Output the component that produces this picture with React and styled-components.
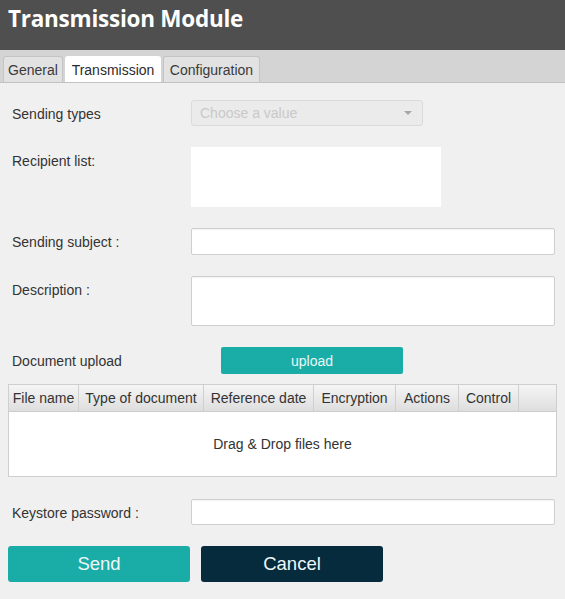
import React from 'react';
import styled, { createGlobalStyle } from 'styled-components';

const GlobalStyle = createGlobalStyle`
  html, body {
    margin: 0;
    padding: 0;
    background: #f0f0f0;
  }
  body {
    font-family: "Liberation Sans", Arial, sans-serif;
    color: #333;
  }
  * {
    box-sizing: border-box;
  }
`;

const Page = styled.div`
  width: 565px;
  min-height: 599px;
  background: #f0f0f0;
`;

const TitleBar = styled.header`
  height: 50px;
  background: #4f4f4f;
  padding: 3px 0 0 8px;
`;

const Title = styled.h1`
  margin: 0;
  font-family: "Open Sans", sans-serif;
  font-weight: 700;
  font-size: 22.5px;
  line-height: 32px;
  color: #ffffff;
  letter-spacing: -0.25px;
`;

const TabBar = styled.nav`
  display: flex;
  align-items: flex-end;
  gap: 2px;
  height: 33px;
  padding: 0 0 0 3px;
  background: #d4d4d4;
  border-bottom: 1px solid #c2c2c2;
`;

const Tab = styled.div`
  height: 26px;
  width: ${p => p.$w}px;
  display: flex;
  align-items: center;
  justify-content: center;
  font-size: 14px;
  color: ${p => (p.$active ? '#2b2b2b' : '#3a3a3a')};
  background: ${p => (p.$active ? '#ffffff' : '#e2e2e2')};
  border: 1px solid ${p => (p.$active ? '#ffffff' : '#c4c4c4')};
  border-bottom: none;
  border-radius: 3px 3px 0 0;
`;

const Content = styled.main`
  display: flex;
  flex-direction: column;
  padding: 17px 10px 0 8px;
`;

const Row = styled.div`
  display: grid;
  grid-template-columns: 183px 1fr;
  align-items: start;
  margin-bottom: ${p => p.$mb ?? 21}px;
`;

const Label = styled.label`
  padding-left: 4px;
  font-size: 14px;
  line-height: 28px;
  margin-bottom: -4px;
  color: #333;
`;

const Select = styled.div`
  width: 232px;
  height: 26px;
  display: flex;
  align-items: center;
  justify-content: space-between;
  padding: 0 10px 0 8px;
  background: #ebebeb;
  border: 1px solid #dadada;
  border-radius: 3px;
  font-size: 14px;
  color: #c9c9c9;
`;

const Caret = styled.span`
  width: 0;
  height: 0;
  border-left: 4px solid transparent;
  border-right: 4px solid transparent;
  border-top: 4px solid #a8a8a8;
`;

const Box = styled.div`
  width: ${p => (p.$w ? `${p.$w}px` : '100%')};
  height: ${p => p.$h}px;
  background: #ffffff;
  border: ${p => (p.$plain ? 'none' : '1px solid #cfcfcf')};
  border-radius: ${p => (p.$plain ? 0 : 2)}px;
  box-shadow: ${p => (p.$plain ? 'none' : 'inset 0 1px 1px rgba(0,0,0,0.05)')};
`;

const UploadButton = styled.button`
  margin-left: 30px;
  width: 182px;
  height: 27px;
  border: none;
  border-radius: 2px;
  background: #1aada8;
  color: #e9f8f7;
  font-family: "Liberation Sans", Arial, sans-serif;
  font-size: 14px;
`;

const Table = styled.div`
  width: 549px;
  height: 93px;
  display: flex;
  flex-direction: column;
  border: 1px solid #cfcfcf;
  background: #ffffff;
  margin-bottom: 22px;
`;

const HeaderRow = styled.div`
  display: flex;
  height: 27px;
  background: linear-gradient(#f5f5f5, #dedede);
  border-bottom: 1px solid #cdcdcd;
`;

const HeaderCell = styled.div`
  width: ${p => (p.$w ? `${p.$w}px` : 'auto')};
  flex: ${p => (p.$w ? 'none' : 1)};
  display: flex;
  align-items: center;
  justify-content: center;
  font-size: 14px;
  color: #333;
  border-right: ${p => (p.$last ? 'none' : '1px solid #cfcfcf')};
  white-space: nowrap;
`;

const DropZone = styled.div`
  flex: 1;
  display: flex;
  align-items: center;
  justify-content: center;
  font-size: 14px;
  color: #333;
`;

const Actions = styled.div`
  display: flex;
  gap: 11px;
`;

const ActionButton = styled.button`
  width: 182px;
  height: 36px;
  border: none;
  border-radius: 3px;
  background: ${p => (p.$dark ? '#062b3d' : '#1aada8')};
  color: #eef7f7;
  font-family: "Liberation Sans", Arial, sans-serif;
  font-size: 18.5px;
`;

const columns = [
  { name: 'File name', w: 70 },
  { name: 'Type of document', w: 125 },
  { name: 'Reference date', w: 110 },
  { name: 'Encryption', w: 82 },
  { name: 'Actions', w: 63 },
  { name: 'Control', w: 60 },
];

export default function App() {
  return (
    <Page>
      <GlobalStyle />
      <TitleBar>
        <Title>Transmission Module</Title>
      </TitleBar>
      <TabBar>
        <Tab $w={60}>General</Tab>
        <Tab $w={96} $active>Transmission</Tab>
        <Tab $w={97}>Configuration</Tab>
      </TabBar>
      <Content>
        <Row>
          <Label>Sending types</Label>
          <Select>
            Choose a value
            <Caret />
          </Select>
        </Row>
        <Row>
          <Label>Recipient list:</Label>
          <Box $w={250} $h={60} $plain />
        </Row>
        <Row>
          <Label>Sending subject :</Label>
          <Box $h={27} />
        </Row>
        <Row>
          <Label>Description :</Label>
          <Box $h={50} />
        </Row>
        <Row $mb={10}>
          <Label>Document upload</Label>
          <div>
            <UploadButton>upload</UploadButton>
          </div>
        </Row>
        <Table>
          <HeaderRow>
            {columns.map(c => (
              <HeaderCell key={c.name} $w={c.w}>{c.name}</HeaderCell>
            ))}
            <HeaderCell $last />
          </HeaderRow>
          <DropZone>Drag &amp; Drop files here</DropZone>
        </Table>
        <Row>
          <Label>Keystore password :</Label>
          <Box $h={26} />
        </Row>
        <Actions>
          <ActionButton>Send</ActionButton>
          <ActionButton $dark>Cancel</ActionButton>
        </Actions>
      </Content>
    </Page>
  );
}
